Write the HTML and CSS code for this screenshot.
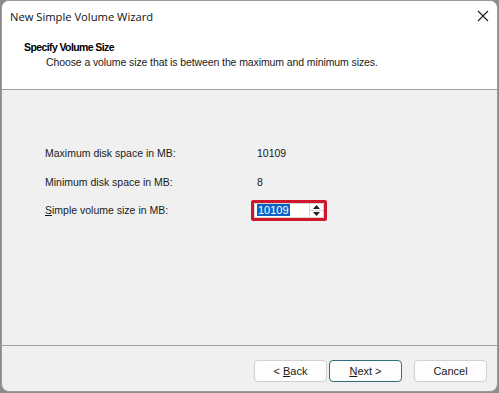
FILE: index.html
```html
<!DOCTYPE html>
<html>
<head>
<meta charset="utf-8">
<link rel="stylesheet" href="styles.css">
</head>
<body>
<div class="window">
  <div class="titlebar">
    <span class="title">New Simple Volume Wizard</span>
    <svg class="close" width="12" height="12" viewBox="0 0 12 12"><path d="M1 1L11 11M11 1L1 11" stroke="#1a1a1a" stroke-width="1.1" fill="none"/></svg>
  </div>
  <div class="header">
    <div class="h-title">Specify Volume Size</div>
    <div class="h-sub">Choose a volume size that is between the maximum and minimum sizes.</div>
  </div>
  <div class="content">
    <div class="row"><span class="label">Maximum disk space in MB:</span><span class="value">10109</span></div>
    <div class="row"><span class="label">Minimum disk space in MB:</span><span class="value">8</span></div>
    <div class="row">
      <span class="label"><u>S</u>imple volume size in MB:</span>
      <div class="highlight">
        <div class="spin">
          <span class="sel">10109</span>
          <div class="arrows">
            <div class="arr"><svg width="7" height="4" viewBox="0 0 7 4"><path d="M3.5 0L7 4H0Z" fill="#222"/></svg></div>
            <div class="arr"><svg width="7" height="4" viewBox="0 0 7 4"><path d="M0 0H7L3.5 4Z" fill="#222"/></svg></div>
          </div>
        </div>
      </div>
    </div>
  </div>
  <div class="footer">
    <button class="btn">&lt; <u>B</u>ack</button>
    <button class="btn btn-default"><u>N</u>ext &gt;</button>
    <button class="btn btn-cancel">Cancel</button>
  </div>
</div>
</body>
</html>
```
FILE: styles.css
```css
html, body {
  margin: 0;
  padding: 0;
  background: #8c8c8c;
  width: 499px;
  height: 393px;
  overflow: hidden;
}
body {
  font-family: "Liberation Sans", Arial, sans-serif;
  font-size: 10.5px;
  color: #1a1a1a;
}
.window {
  box-sizing: border-box;
  width: 497px;
  height: 392px;
  margin-left: 1px;
  border: 1px solid #9a9a9a;
  border-radius: 8px;
  background: #f0f0f0;
  overflow: hidden;
  display: flex;
  flex-direction: column;
}
.titlebar {
  height: 30px;
  background: #fff;
  display: flex;
  align-items: center;
  justify-content: space-between;
  padding: 0 8px 0 8px;
}
.title {
  font-size: 11.2px;
  color: #111;
  font-family: "Open Sans", "Liberation Sans", sans-serif;
}
.header {
  background: #fff;
  height: 59px;
  border-bottom: 1px solid #a0a0a0;
  padding: 10px 0 0 22px;
  box-sizing: border-box;
}
.h-title {
  font-weight: bold;
  color: #000;
  letter-spacing: -0.6px;
}
.h-sub {
  margin-top: 3px;
  padding-left: 22px;
  letter-spacing: -0.1px;
  color: #1a1a1a;
}
.content {
  flex: 1;
  padding: 49px 0 0 43px;
  border-bottom: 1px solid #a0a0a0;
}
.row {
  display: flex;
  align-items: center;
  height: 28.5px;
}
.label { width: 212px; }
.highlight {
  border: 3px solid #d0162a;
  border-radius: 2px;
  background: #fff;
  margin-left: -6px;
}
.spin {
  box-sizing: border-box;
  width: 70px;
  height: 15px;
  display: flex;
  align-items: center;
  justify-content: space-between;
  border: 1px solid #d4d4d4;
  background: #fff;
  padding-left: 2px;
}
.sel {
  background: #0a64c8;
  color: #fff;
  padding: 0 1px;
  line-height: 12px;
  font-size: 11px;
}
.arrows {
  display: flex;
  flex-direction: column;
  width: 13px;
  height: 13px;
  border-left: 1px solid #d6d6d6;
}
.arr {
  flex: 1;
  display: flex;
  align-items: center;
  justify-content: center;
}
.arr + .arr { border-top: 1px solid #d6d6d6; }
.footer {
  height: 45px;
  display: flex;
  align-items: flex-start;
  padding: 14px 0 0 252px;
  box-sizing: border-box;
}
.btn {
  width: 73px;
  height: 22px;
  border: 1px solid #d0d0d0;
  border-radius: 4px;
  background: #fdfdfd;
  font-family: "Liberation Sans", Arial, sans-serif;
  font-size: 11px;
  color: #1a1a1a;
  padding: 0;
}
.btn-default {
  margin-left: 2px;
  border: 1px solid #2f6f7a;
}
.btn-cancel { margin-left: 12px; }
```
